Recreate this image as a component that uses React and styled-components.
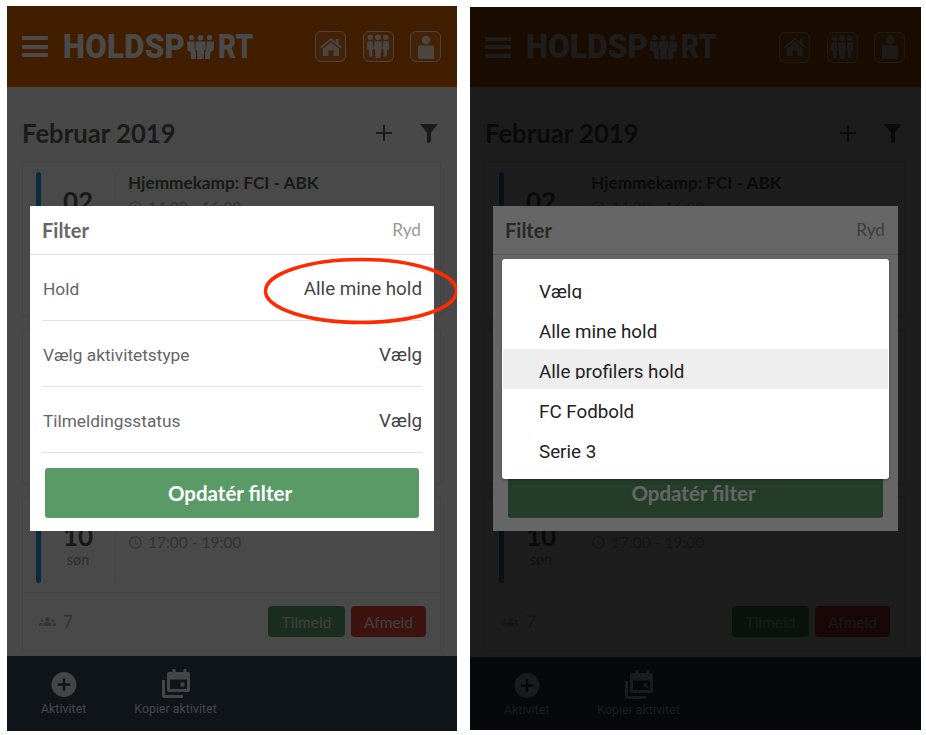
import React from "react";
import styled, { createGlobalStyle } from "styled-components";
import { MdAccessTime, MdAddCircle, MdGroups } from "react-icons/md";

const Global = createGlobalStyle`
  html, body { margin: 0; padding: 0; background: #fff; }
  * { box-sizing: border-box; }
`;
const Page = styled.div`
  display: flex; gap: 13px; padding-left: 7px; width: 926px; height: 735px;
  overflow: hidden; align-items: flex-start;
`;
const Phone = styled.div`
  position: relative; display: flex; flex-direction: column; overflow: hidden;
  width: ${p => p.$w}px; height: ${p => p.$h}px; margin-top: ${p => p.$top}px;
  background: #f0f0f0; font-family: "Lato", sans-serif; flex: none;
`;
const Header = styled.header`
  flex: none; height: ${p => p.$h}px; background: #dc6400; display: flex; align-items: center;
  padding: 0 16px 0 15px; color: #fff;
`;
const Burger = styled.div`
  width: 26px; height: 21px; display: flex; flex-direction: column; justify-content: space-between;
  margin-right: 15px; flex: none;
  & > i { display: block; height: 4px; background: #f7f7f7; border-radius: 1px; }
`;
const Logo = styled.div`
  display: flex; align-items: center; flex: none; height: 26px; color: #f7f7f7;
  & > svg { flex: none; margin: 0 4px 0 1px; }
`;
const LogoWord = styled.span`
  display: block; width: ${p => p.$w}px; flex: none; white-space: nowrap;
  font-family: "Roboto", sans-serif; font-weight: 900; font-size: 33px; line-height: 26px;
  letter-spacing: .3px; transform: scaleX(${p => p.$scale}); transform-origin: left center;
`;
const HeaderIcons = styled.div`
  margin-left: auto; display: flex; gap: 16.5px;
`;
const HeaderBtn = styled.div`
  width: 31px; height: 31px; border: 1.5px solid #fff; border-radius: 6px; background: rgba(255,255,255,.12);
  display: flex; align-items: center; justify-content: center; opacity: .85;
`;
const Main = styled.main`
  flex: 1; min-height: 0; overflow: hidden; padding: 0 16px 0 15px;
`;
const TitleRow = styled.div`
  height: 75px; display: flex; align-items: center; padding-top: 17px;
`;
const Month = styled.h1`
  margin: 0; font-size: 25.7px; font-weight: 700; flex: 1; color: #5c5c5c;
`;
const TitleTools = styled.div`
  display: flex; align-items: center; gap: 28px; margin-right: 3px;
`;
const Card = styled.article`
  background: #f6f6f6; border: 1px solid #e0e0e0; margin-bottom: 13px;
  height: ${p => p.$h}px;
`;
const CardBody = styled.div`
  height: 95px; display: flex; padding: 9px 0 9px 13px; border-bottom: 1px solid #ececec;
`;
const Bar = styled.div`
  width: 5px; border-radius: 3px; background: #2490d0; flex: none;
`;
const DateCol = styled.div`
  width: 75px; flex: none; display: flex; flex-direction: column; align-items: center; padding-top: 15px;
  border-right: 1px solid #e8e8e8;
`;
const Day = styled.div`
  font-size: 26px; font-weight: 700; line-height: 29px; color: #555;
`;
const Weekday = styled.div`
  font-size: 14.5px; line-height: 17px; color: #999;
`;
const Info = styled.div`
  padding: 1px 0 0 12px;
`;
const EventTitle = styled.div`
  font-size: 17.2px; font-weight: 700; color: #555; line-height: 20px;
`;
const Time = styled.div`
  display: flex; align-items: center; gap: 5px; font-size: 15.5px; color: #aaa; margin-top: 5px; line-height: 18px;
  & > svg { width: 15px; height: 15px; }
`;
const CardFooter = styled.div`
  height: 57px; display: flex; align-items: center; padding: 0 14px 0 16px; color: #aaa; font-size: 17px;
`;
const Count = styled.div`
  display: flex; align-items: center; gap: 7px; margin-right: auto;
  & > svg { width: 17px; height: 17px; }
`;
const ActionBtn = styled.button`
  height: 31px; border: none; border-radius: 4px; font-family: "Lato", sans-serif; font-size: 15.5px;
  background: ${p => p.$bg}; color: #d8d8d8; padding: 0; width: ${p => p.$w}px; margin-left: 6px;
`;
const BottomBar = styled.nav`
  flex: none; height: ${p => p.$h}px; background: #324350; display: flex; gap: 48px; padding: 13px 0 0 34px;
  font-family: "Roboto", sans-serif; font-size: 12.2px;
`;
const BottomItem = styled.div`
  display: flex; flex-direction: column; align-items: center; color: #e8e8e8;
  & > svg { height: 31px; display: block; }
  & > span { line-height: 14px; margin-top: 2px; letter-spacing: .1px; }
`;
const Backdrop = styled.div`
  position: absolute; inset: 0; background: rgba(0,0,0,${p => p.$a});
  display: flex; align-items: center; justify-content: center;
`;
const Modal = styled.section`
  position: relative; width: ${p => p.$w}px; height: 325px; background: #fff; margin-top: -1px;
  display: flex; flex-direction: column;
`;
const ModalHead = styled.div`
  height: 49px; flex: none; border-bottom: 1px solid #ddd; display: flex; align-items: center;
  justify-content: space-between; padding: 0 13px 0 12px;
`;
const ModalTitle = styled.div`
  font-size: 20px; font-weight: 700; color: #666;
`;
const Clear = styled.div`
  font-size: 17.2px; color: #999;
`;
const FilterRow = styled.div`
  height: 66px; flex: none; margin: 0 12px; padding-top: 3px; border-bottom: 1.5px solid #e2e2e2;
  display: flex; align-items: center; justify-content: space-between; font-family: "Roboto", sans-serif;
`;
const RowLabel = styled.div`
  font-size: 17.3px; color: #666; margin-left: 1px;
`;
const RowValue = styled.div`
  font-size: 18.8px; color: #444;
`;
const SubmitBtn = styled.button`
  margin: 15px 15px 0; height: 50px; flex: none; border: none; border-radius: 3px; background: #5a9a66; color: #fff;
  font-family: "Lato", sans-serif; font-weight: 700; font-size: 20.5px; padding: 0 4px 0 0;
`;
const Ellipse = styled.svg`
  position: absolute; left: 234px; top: 52px; overflow: visible; pointer-events: none;
`;
const Dropdown = styled.div`
  width: 387px; height: 220px; background: #fff; border-radius: 3px; padding: 10px 1px;
  font-family: "Roboto", sans-serif; box-shadow: 0 1px 3px rgba(0,0,0,.3);
`;
const Option = styled.div`
  height: 40px; padding: 13px 0 0 36px; background: ${p => (p.$active ? "#eee" : "transparent")};
`;
const OptionText = styled.div`
  height: 17px; line-height: 21px; overflow: hidden; font-size: 18.8px; color: #222;
`;

const PeopleGlyph = ({ color }) => (
  <svg width="27" height="24" viewBox="0 0 27 24" fill={color}>
    <circle cx="4.500" cy="2.600" r="2.600" /><circle cx="13.500" cy="2.800" r="2.800" /><circle cx="22.500" cy="2.600" r="2.600" />
    <path d="M8.800 6.500h9.400l.6 8.500-1.800.6-.4 8.400h-6.200l-.4-8.400-1.800-.6z" />
    <path d="M0 6.500h7.400l.5 9.500 1 .5V24H4l-.4-7L.4 15.500z" />
    <path d="M27 6.500h-7.400l-.5 9.500-1 .5V24H23l.4-7 3.200-1.500z" />
  </svg>
);

const Screen = ({ w, h, top, headH, barH, card3, children }) => (
  <Phone $w={w} $h={h} $top={top}>
    <Header $h={headH}>
      <Burger><i /><i /><i /></Burger>
      <Logo>
        <LogoWord $w={123} $scale={0.945}>HOLDSP</LogoWord>
        <PeopleGlyph color="#f7f7f7" />
        <LogoWord $w={34} $scale={0.84}>RT</LogoWord>
      </Logo>
      <HeaderIcons>
        <HeaderBtn>
          <svg width="22" height="20" viewBox="0 0 22 20" fill="#fff">
            <path d="M11 1 L16 5 V2 H18.500 V7.200 L22 10 L20.800 11.300 L11 3.600 L1.200 11.300 L0 10z" />
            <path d="M11 5.200 L19 11.500 V19 H13.500 V13.500 H8.500 V19 H3 V11.500z" />
          </svg>
        </HeaderBtn>
        <HeaderBtn>
          <svg width="26" height="25" viewBox="0 0 26 26" fill="#fff">
            <circle cx="5" cy="3.500" r="2.800" /><circle cx="13" cy="3.500" r="3" /><circle cx="21" cy="3.500" r="2.800" />
            <path d="M9.300 7.500h7.400l.9 8-1.500.6-.5 8.900h-5.200l-.5-8.900-1.500-.6z" />
            <path d="M2 7.500h5.500l.6 8.500-1 .6v7H4l-.4-6.500-2.300-1.500z" />
            <path d="M24 7.500h-5.500l-.6 8.500 1 .6v7h3.100l.4-6.500 2.300-1.500z" />
          </svg>
        </HeaderBtn>
        <HeaderBtn>
          <svg width="20" height="24" viewBox="0 0 20 24" fill="#fff">
            <circle cx="10" cy="5" r="4.300" />
            <path d="M3.500 10.500h13q1.500 0 1.500 1.500v12H2V12q0-1.500 1.500-1.500z" />
          </svg>
        </HeaderBtn>
      </HeaderIcons>
    </Header>
    <Main>
      <TitleRow>
        <Month>Februar 2019</Month>
        <TitleTools>
          <svg width="16" height="16" viewBox="0 0 16 16" stroke="#5c5c5c" strokeWidth="2"><path d="M8 0v16M0 8h16" /></svg>
          <svg width="18" height="19" viewBox="0 0 18 19" fill="#5c5c5c"><path d="M0 0h18L11 8.500V18l-4 1V8.500z" /></svg>
        </TitleTools>
      </TitleRow>
      <Card $h={155}>
        <CardBody>
          <Bar />
          <DateCol><Day>02</Day></DateCol>
          <Info><EventTitle>Hjemmekamp: FCI - ABK</EventTitle><Time><MdAccessTime />14:00 - 16:00</Time></Info>
        </CardBody>
      </Card>
      <Card $h={154} />
      <Card $h={card3}>
        <CardBody>
          <Bar />
          <DateCol><Day>10</Day><Weekday>søn</Weekday></DateCol>
          <Info><EventTitle>&nbsp;</EventTitle><Time><MdAccessTime />17:00 - 19:00</Time></Info>
        </CardBody>
        <CardFooter>
          <Count><MdGroups />7</Count>
          <ActionBtn $bg="#5a9666" $w={77}>Tilmeld</ActionBtn>
          <ActionBtn $bg="#c84232" $w={75}>Afmeld</ActionBtn>
        </CardFooter>
      </Card>
    </Main>
    <BottomBar $h={barH}>
      <BottomItem>
        <MdAddCircle size={30} />
        <span>Aktivitet</span>
      </BottomItem>
      <BottomItem>
        <svg width="30" height="31" viewBox="0 0 30 31" fill="currentColor">
          <path d="M1 11h3v15h18v3H3.500Q1 29 1 26.500z" />
          <path fillRule="evenodd" d="M10 3h1.500V0h3v3h8V0h3v3H27q2 0 2 2v16q0 2-2 2H8q-2 0-2-2V5q0-2 2-2zM9 10.500V20h17v-9.500zM19.500 13.500h4v4h-4z" />
        </svg>
        <span>Kopier aktivitet</span>
      </BottomItem>
    </BottomBar>
    {children}
  </Phone>
);

const FilterModal = ({ marked, w }) => (
  <Modal $w={w}>
    <ModalHead><ModalTitle>Filter</ModalTitle><Clear>Ryd</Clear></ModalHead>
    <FilterRow><RowLabel>Hold</RowLabel><RowValue>Alle mine hold</RowValue></FilterRow>
    <FilterRow><RowLabel>Vælg aktivitetstype</RowLabel><RowValue>Vælg</RowValue></FilterRow>
    <FilterRow><RowLabel>Tilmeldingsstatus</RowLabel><RowValue>Vælg</RowValue></FilterRow>
    <SubmitBtn>Opdatér filter</SubmitBtn>
    {marked && (
      <Ellipse width="194" height="66" viewBox="0 0 194 66">
        <ellipse cx="97" cy="33" rx="95.500" ry="31.500" fill="none" stroke="#ff2a00" strokeWidth="3.500" />
      </Ellipse>
    )}
  </Modal>
);

export default function App() {
  return (
    <>
      <Global />
      <Page>
        <Screen w={450} h={725} top={6} headH={81} barH={75} card3={154}>
          <Backdrop $a={0.7}><FilterModal marked w={404} /></Backdrop>
        </Screen>
        <Screen w={451} h={723} top={7} headH={80} barH={73} card3={154}>
          <Backdrop $a={0.7}><FilterModal w={405} /></Backdrop>
          <Backdrop $a={0.6}>
            <Dropdown>
              <Option><OptionText>Vælg</OptionText></Option>
              <Option><OptionText>Alle mine hold</OptionText></Option>
              <Option $active><OptionText>Alle profilers hold</OptionText></Option>
              <Option><OptionText>FC Fodbold</OptionText></Option>
              <Option><OptionText>Serie 3</OptionText></Option>
            </Dropdown>
          </Backdrop>
        </Screen>
      </Page>
    </>
  );
}
